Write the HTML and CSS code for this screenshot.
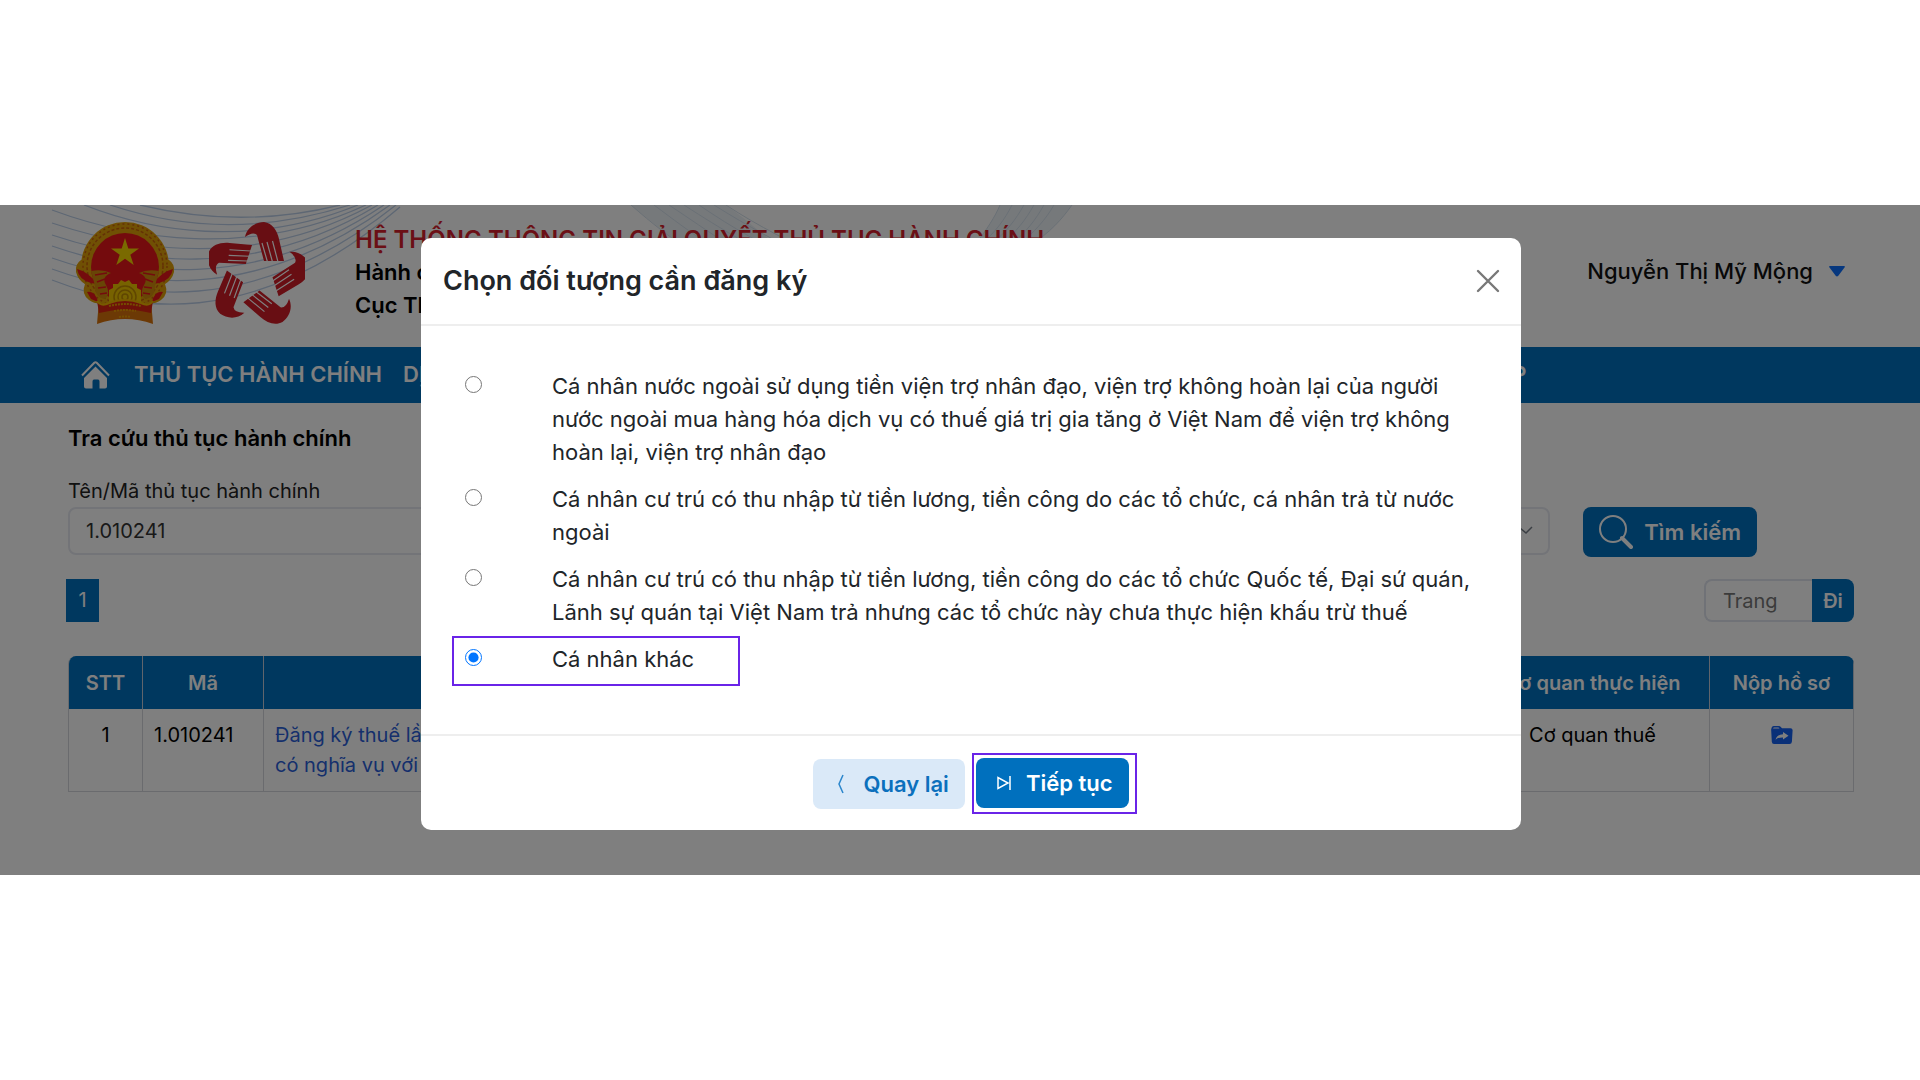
FILE: index.html
```html
<!DOCTYPE html>
<html lang="vi">
<head>
<meta charset="utf-8">
<meta name="viewport" content="width=device-width, initial-scale=1">
<title>Hệ thống thông tin giải quyết thủ tục hành chính</title>
<link rel="stylesheet" href="styles.css">
</head>
<body>
<div class="app">
  <header class="masthead">
    <svg class="waves" viewBox="0 0 1100 142" width="1100" height="142" aria-hidden="true">
      <g fill="none" stroke="#bccfe8" stroke-width="1.300">
        <path d="M52 75C130 105 250 130 400 2"/>
        <path d="M52 64C130 92 250 116 396 0"/>
        <path d="M52 53C130 80 250 102 390 0"/>
        <path d="M52 41C130 68 250 90 384 0"/>
        <path d="M52 30C130 56 250 78 378 0"/>
        <path d="M52 18C130 44 250 66 372 0"/>
        <path d="M52 5C130 34 250 54 366 0"/>
        <path d="M84 0C150 26 250 44 358 0"/>
        <path d="M110 0C170 20 250 32 350 0"/>
        <path d="M140 0C190 12 260 20 340 0"/>
      </g>
      <g transform="translate(14 0)">
        <path d="M617 0C650 28 680 50 720 70H800C760 40 740 20 712 0Z" fill="#edf2f7"/>
        <path d="M617 0C660 38 690 55 720 70M640 0C680 30 700 45 735 60M655 0C700 30 720 45 750 60M670 0C710 26 735 40 765 55M685 0C720 24 750 40 780 55M700 0C735 22 765 38 800 55M712 0C745 22 780 38 810 55" fill="none" stroke="#d4e1ec"/>
      </g>
      <g transform="translate(20 0)">
        <path d="M980 0C975 12 967 24 955 40H1010C1030 28 1042 14 1052 0Z" fill="#edf2f7"/>
        <path d="M980 0C975 12 967 24 955 40M992 0C985 14 975 28 960 40M1004 0C996 14 986 28 970 40M1014 0C1006 14 996 28 980 40M1024 0C1016 14 1006 28 990 40M1034 0C1026 14 1014 28 998 40M1052 0C1042 14 1030 28 1010 40" fill="none" stroke="#d4e1ec"/>
      </g>
    </svg>
    <svg class="emblem" viewBox="0 0 100 103" width="100" height="103" role="img" aria-label="Quốc huy Việt Nam">
      <path d="M24 78L22 102Q50 92 78 102L76 78Z" fill="#d9730a"/>
      <circle cx="50" cy="44" r="44" fill="#e0a008"/>
      <path d="M6 38Q0 42 1 50Q3 58 10 62Q6 72 14 78Q22 84 34 80H66Q78 84 86 78Q94 72 90 62Q97 58 99 50Q100 42 94 38Z" fill="#e0a008"/>
      <circle cx="50" cy="44" r="42" fill="none" stroke="#c8600c" stroke-width="1.500" stroke-dasharray="2 3"/>
      <circle cx="50" cy="44" r="38" fill="none" stroke="#c8600c" stroke-width="1.500" stroke-dasharray="3 2"/>
      <circle cx="50" cy="45" r="34" fill="#e8161b"/>
      <path d="M50 16L53.300 26.400H64L55.300 32.700L58.700 43L50 36.700L41.300 43L44.700 32.700L36 26.400H46.700Z" fill="#f5d400"/>
      <path d="M2 47Q14 50 22 62L16 61Q4 58 2 47ZM98 47Q86 50 78 62L84 61Q96 58 98 47ZM12 70Q20 68 23 80L16 77ZM88 70Q80 68 77 80L84 77Z" fill="#e8161b"/>
      <path d="M16 49Q28 47 36 51Q26 55 31 63Q36 72 30 77Q20 76 20 64ZM84 49Q72 47 64 51Q74 55 69 63Q64 72 70 77Q80 76 80 64Z" fill="#d08a0c"/>
      <path d="M20 53L32 51M22 60L30 57M23 66L31 65M25 72L32 71M80 53L68 51M78 60L70 57M77 66L69 65M75 72L68 71" stroke="#e8161b" stroke-width="1.500"/>
      <path d="M34 80L34 68L38 66L38 62L43 62L46 58L50 60L54 58L57 62L62 62L62 66L66 68L66 80Z" fill="#eec400"/>
      <g fill="none" stroke="#c08c00" stroke-width="1.500"><circle cx="50" cy="75" r="3"/><circle cx="50" cy="75" r="7"/><circle cx="50" cy="75" r="11"/></g>
      <path d="M22 79Q26 84 34 82Q50 74 66 82Q74 84 78 79L76 91Q50 84 24 91Z" fill="#dc2412"/>
      <path d="M22 79Q26 85 34 81Q50 75 66 81Q74 85 78 79" fill="none" stroke="#f0b400" stroke-width="2"/>
      <path d="M39 89Q50 87 61 89M34 84Q50 80 66 84M44 95Q50 94 56 95" stroke="#e89a00" stroke-width="2" stroke-dasharray="2 1" fill="none"/>
    </svg>
    <svg class="hands" viewBox="0 0 96 103" width="96" height="103" role="img" aria-label="Một cửa">
      <defs>
        <g id="hand">
          <path d="M36 15C38 5 47 0 55 0C63 1 68 8 70 17L75 39H55L48 13Q44 9 36 15Z" fill="#d01c26"/>
          <path d="M53 21L58.500 40M58 20L63.500 40M63.500 19L69 40" stroke="#fff" stroke-width="1.200"/>
        </g>
      </defs>
      <use href="#hand"/>
      <use href="#hand" transform="rotate(72 48 53)"/>
      <use href="#hand" transform="rotate(144 48 53)"/>
      <use href="#hand" transform="rotate(216 48 53)"/>
      <use href="#hand" transform="rotate(288 48 53)"/>
    </svg>
    <div class="brand">
      <p class="brand-title">HỆ THỐNG THÔNG TIN GIẢI QUYẾT THỦ TỤC HÀNH CHÍNH</p>
      <p>Hành chính</p>
      <p>Cục Thuế</p>
    </div>
    <button class="user" type="button">Nguyễn Thị Mỹ Mộng
      <svg viewBox="0 0 16 11" width="16" height="11" aria-hidden="true"><path d="M1 0H15Q16.500 0 15.500 1.500L9.300 9.800Q8 11.400 6.700 9.800L.5 1.500Q-.5 0 1 0Z" fill="#0d6efd"/></svg>
    </button>
  </header>

  <nav class="nav">
    <a class="home" href="#" aria-label="Trang chủ"><svg viewBox="0 0 29 28" width="29" height="28" aria-hidden="true"><path d="M1 14.500L13.300 1.800Q14.500.6 15.700 1.800L28 14.500" fill="none" stroke="#fff" stroke-width="2"/><path d="M14.500 5.500L26 17V25.500Q26 27.500 24 27.500H18.500V20.500Q18.500 18.500 17 18.500H13Q11.500 18.500 11.500 20.500V27.500H5Q3 27.500 3 25.500V17Z" fill="#fff"/></svg></a>
    <a href="#">THỦ TỤC HÀNH CHÍNH</a>
    <a href="#">DỊCH VỤ CÔNG</a>
    <a class="nav-last" href="#">HỎI ĐÁP</a>
  </nav>

  <main class="content">
    <h1>Tra cứu thủ tục hành chính</h1>
    <form class="search">
      <div class="field">
        <label for="code">Tên/Mã thủ tục hành chính</label>
        <input id="code" type="text" value="1.010241">
      </div>
      <div class="field">
        <label for="agency">Cơ quan</label>
        <div class="select-wrap">
          <select id="agency"><option>Tất cả</option></select>
          <svg viewBox="0 0 16 16" width="16" height="16" aria-hidden="true"><path d="M2 5L8 10L14 4" fill="none" stroke="#777e88" stroke-width="1.500"/></svg>
        </div>
      </div>
      <button class="btn btn-primary btn-search" type="button">
        <svg viewBox="0 0 34 34" width="34" height="34" aria-hidden="true"><circle cx="14" cy="14" r="13" fill="none" stroke="#fff" stroke-width="2"/><path d="M23 23L32 32" stroke="#fff" stroke-width="4" stroke-linecap="round"/></svg>
        Tìm kiếm</button>
    </form>

    <div class="pager">
      <a class="page" href="#">1</a>
      <form class="goto">
        <input type="text" placeholder="Trang" aria-label="Trang">
        <button type="button">Đi</button>
      </form>
    </div>

    <table class="results">
      <colgroup><col class="c-no"><col class="c-code"><col><col class="c-org"><col class="c-act"></colgroup>
      <thead><tr><th>STT</th><th>Mã</th><th>Thủ tục hành chính</th><th>Cơ quan thực hiện</th><th>Nộp hồ sơ</th></tr></thead>
      <tbody><tr>
        <td class="mid">1</td><td>1.010241</td>
        <td><a href="#">Đăng ký thuế lần đầu đối với cá nhân<br>có nghĩa vụ với ngân sách nhà nước</a></td>
        <td class="mid">Cơ quan thuế</td>
        <td class="mid"><a href="#" aria-label="Nộp hồ sơ"><svg viewBox="0 0 22 18" width="22" height="18" aria-hidden="true"><path d="M2.500 0H8Q9 0 9.800 1L11 2.200H19.500Q21.800 2.200 21.600 4.500L20.900 15.800Q20.700 18 18.500 18H3Q1 18 .8 15.800L.2 4.500Q0 3.500 .4 2.500Q.6 0 2.500 0Z" fill="#1560f0"/><path d="M2 2.600Q2.300 1.500 3.200 1.500H7.500L8.500 2.600Z" fill="#fff"/><path d="M12 6L17.500 9.800L12 13.600V11.400Q7 11.200 4.500 13.800Q6 8.400 12 8.200Z" fill="#fff"/></svg></a></td>
      </tr></tbody>
    </table>
  </main>

  <div class="overlay">
    <section class="modal" role="dialog" aria-labelledby="dlg-title">
      <div class="modal-head">
        <h2 id="dlg-title">Chọn đối tượng cần đăng ký</h2>
        <button class="close" type="button" aria-label="Đóng"><svg viewBox="0 0 24 24" width="24" height="24" aria-hidden="true"><path d="M2 2L22 22M22 2L2 22" stroke="#787878" stroke-width="2.400" stroke-linecap="round"/></svg></button>
      </div>
      <div class="modal-body">
        <div class="option"><input type="radio" name="who" id="o1"><label for="o1">Cá nhân nước ngoài sử dụng tiền viện trợ nhân đạo, viện trợ không hoàn lại của người nước ngoài mua hàng hóa dịch vụ có thuế giá trị gia tăng ở Việt Nam để viện trợ không hoàn lại, viện trợ nhân đạo</label></div>
        <div class="option"><input type="radio" name="who" id="o2"><label for="o2">Cá nhân cư trú có thu nhập từ tiền lương, tiền công do các tổ chức, cá nhân trả từ nước ngoài</label></div>
        <div class="option"><input type="radio" name="who" id="o3"><label for="o3">Cá nhân cư trú có thu nhập từ tiền lương, tiền công do các tổ chức Quốc tế, Đại sứ quán, Lãnh sự quán tại Việt Nam trả nhưng các tổ chức này chưa thực hiện khấu trừ thuế</label></div>
        <div class="option marked"><input type="radio" name="who" id="o4" checked><label for="o4">Cá nhân khác</label></div>
      </div>
      <div class="modal-foot">
        <button class="btn btn-soft" type="button"><svg viewBox="0 0 14 20" width="14" height="20" aria-hidden="true"><path d="M9 1L5 10L9 19" fill="none" stroke="#2b86cc" stroke-width="1.500"/></svg>Quay lại</button>
        <span class="marked"><button class="btn btn-primary" type="button"><svg viewBox="0 0 14 14" width="14" height="14" aria-hidden="true"><path d="M1 1.500V12.500L11 7ZM13 0V14" fill="none" stroke="#fff" stroke-width="1.500"/></svg>Tiếp tục</button></span>
      </div>
    </section>
  </div>
</div>
</body>
</html>
```
FILE: styles.css
```css
*, ::before, ::after { box-sizing: border-box; }

body {
  margin: 0;
  min-height: 100vh;
  display: flex;
  flex-direction: column;
  justify-content: center;
  background: #fff;
  color: #000;
  font: 20px/30px Inter, "Liberation Sans", sans-serif;
}

p, h1, h2 { margin: 0; }
a { color: #2b5fd9; text-decoration: none; }
button, input, select { font: inherit; }
button { cursor: pointer; }
svg { display: block; flex: none; }

.app { position: relative; padding-bottom: 83px; background: #fff; }

/* Masthead */
.masthead {
  position: relative;
  display: flex;
  align-items: center;
  height: 142px;
  padding: 0 75px;
  overflow: hidden;
}
.waves { position: absolute; left: 0; top: 0; }
.emblem, .hands, .brand, .user { position: relative; }
.emblem { margin: 0 34px 6px 0; }
.hands { margin: 0 50px 6px 0; }
.brand { font-size: 22px; line-height: 33px; font-weight: 600; margin-bottom: 7px; }
.brand-title { color: #d61f2c; font-size: 24px; }
.user {
  display: flex;
  align-items: center;
  gap: 16px;
  margin: 0 0 10px auto;
  padding: 0;
  border: 0;
  background: none;
  color: #111;
  font-size: 22px;
  font-weight: 500;
}

/* Navigation */
.nav {
  display: flex;
  align-items: center;
  gap: 21px;
  height: 56px;
  padding: 0 20.5% 2px 81px;
  background: #0070be;
  font-size: 22px;
  font-weight: 600;
}
.nav a { color: #fff; }
.nav .home { padding: 2px 3px 0 0; }
.nav-last { margin-left: auto; }

/* Search */
.content { padding: 20px 66px 0 68px; }
h1 { font-size: 22px; line-height: 30px; font-weight: 600; }
.search { display: flex; align-items: flex-end; gap: 33px; margin-top: 23px; }
.field { flex: 1; display: flex; flex-direction: column; }
.field input, .field select {
  width: 100%;
  height: 48px;
  padding: 0 16px;
  border: 2px solid #e6e9f0;
  border-radius: 8px;
  background: #fff;
  color: #333;
  appearance: none;
}
.field label { margin-bottom: 1px; color: #222; }
.select-wrap { position: relative; }
.select-wrap svg { position: absolute; right: 16px; top: 16px; }
.btn {
  display: flex;
  align-items: center;
  height: 50px;
  border: 0;
  border-radius: 8px;
  font-size: 22px;
  font-weight: 600;
}
.btn-primary { background: #0070be; color: #fff; }
.btn-search { gap: 11px; padding: 0 16px; margin: 0 97px -2px 0; }

/* Pager */
.pager { display: flex; justify-content: space-between; margin: 24px 0 34px -2px; }
.page {
  width: 33px;
  height: 43px;
  line-height: 43px;
  text-align: center;
  background: #0070be;
  color: #fff;
}
.goto { display: flex; height: 43px; }
.goto input {
  width: 108px;
  padding: 0 17px;
  border: 2px solid #e0e4ee;
  border-right: 0;
  border-radius: 8px 0 0 8px;
}
.goto input::placeholder { color: #777; opacity: 1; }
.goto button {
  width: 42px;
  padding: 0;
  border: 0;
  border-radius: 0 8px 8px 0;
  background: #0070be;
  color: #fff;
  font-weight: 600;
}

/* Results */
.results {
  width: 100%;
  table-layout: fixed;
  border-spacing: 0;
  border-left: 1px solid #d4d7dd;
  border-radius: 8px 8px 0 0;
  overflow: hidden;
}
.c-no { width: 74px; }
.c-code { width: 121px; }
.c-org { width: 234px; }
.c-act { width: 144px; }
th { height: 53px; padding: 0; border-right: 1px solid #c0cbd8; background: #0070be; color: #fff; font-weight: 600; }
td { height: 80px; padding: 11px 11px; border-right: 1px solid #d4d7dd; border-bottom: 1px solid #d4d7dd; vertical-align: top; }
.mid { text-align: center; }
td svg { margin: 6px auto 0; }

/* Dialog */
.overlay {
  position: absolute;
  inset: 0;
  padding: 33px 0 0 22px;
  background: rgba(0, 0, 0, .5);
}
.modal { max-width: 1100px; margin: 0 auto; border-radius: 10px; background: #fff; color: #212529; }
.modal-head {
  display: flex;
  justify-content: space-between;
  align-items: center;
  height: 88px;
  padding: 0 21px 0 22px;
  border-bottom: 2px solid #eee;
}
h2 { font-size: 27px; line-height: 36px; font-weight: 600; }
.close { padding: 0; border: 0; background: none; }
.modal-body {
  display: flex;
  flex-direction: column;
  gap: 14px;
  padding: 44px 44px 58px;
  font-size: 22px;
  line-height: 33px;
}
.option { position: relative; display: flex; align-items: flex-start; gap: 70px; }
.option input { flex: none; width: 17px; height: 17px; margin: 6px 0 0; }
.option.marked::after {
  content: "";
  position: absolute;
  left: -13px;
  top: -7px;
  width: 288px;
  height: 50px;
  border: 2px solid #6a24e8;
}
.modal-foot {
  display: flex;
  justify-content: center;
  align-items: center;
  gap: 7px;
  padding: 17px 0 16px 8px;
  border-top: 2px solid #eee;
}
.modal-foot .btn { padding: 0 16px 0 21px; gap: 15px; }
.btn-soft { background: #dae9f8; color: #0c70bd; }
.modal-foot .marked { padding: 3px 6px 4px 2px; border: 2px solid #6a24e8; }
```
